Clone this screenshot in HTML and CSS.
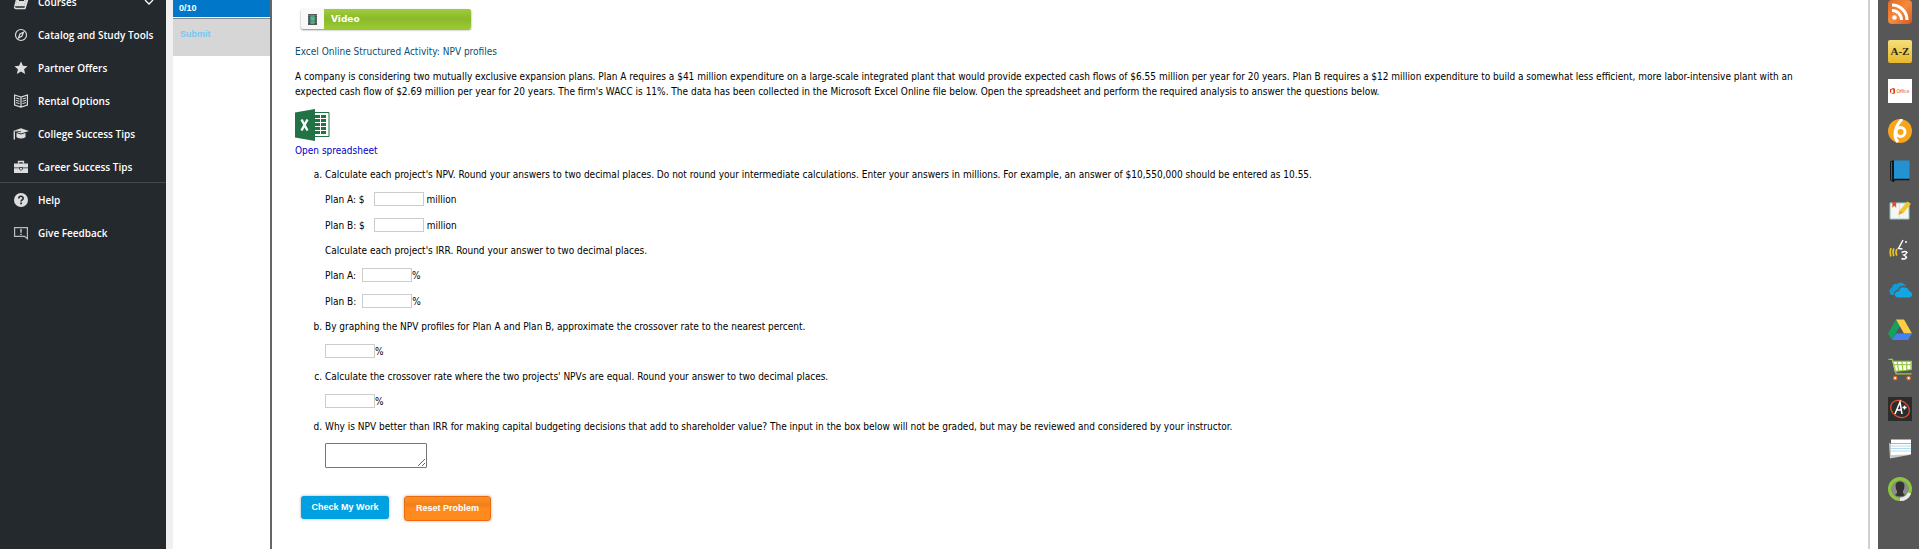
FILE: index.html
```html
<!DOCTYPE html>
<html lang="en">
<head>
<meta charset="utf-8">
<title>NPV profiles</title>
<link rel="stylesheet" href="styles.css">
</head>
<body>
<div class="app">
  <nav class="sidebar" aria-label="Main">
    <ul class="menu">
      <li><a class="menu-link" href="#">
        <svg class="menu-icon" viewBox="0 0 16 16"><path d="M4.500 2h10l-2.500 9.500H2zM1.500 12.500c0 1.500.5 2 1.500 2h9L15 4.500" fill="none" stroke="#ddd" stroke-width="1.400"/><path d="M5 2h9l-2.500 9h-9z" fill="#ddd"/><path d="M6.500 4.500h5M6 6.500h5" stroke="#24292d"/></svg>
        Courses
        <svg class="chevron" viewBox="0 0 10 10"><path d="M1 3l4 4 4-4" fill="none" stroke="#fff" stroke-width="1.300"/></svg></a></li>
      <li><a class="menu-link" href="#">
        <svg class="menu-icon" viewBox="0 0 16 16"><circle cx="8" cy="8" r="5.500" fill="none" stroke="#ddd" stroke-width="1.200"/><path d="M10.500 5.200L9 9l-3.500 2L7 7z" fill="none" stroke="#ddd" stroke-width="1.200"/></svg>
        Catalog and Study Tools</a></li>
      <li><a class="menu-link" href="#">
        <svg class="menu-icon" viewBox="0 0 16 16"><path d="M8 1.500l1.900 4.300 4.700.4-3.500 3.100 1 4.700L8 11.600 3.900 14l1-4.700L1.400 6.200l4.700-.4z" fill="#ddd"/></svg>
        Partner Offers</a></li>
      <li><a class="menu-link" href="#">
        <svg class="menu-icon" viewBox="0 0 16 16"><path d="M8 4L1.600 2v10L8 14l6.400-2V2zM8 4v10" fill="none" stroke="#ddd" stroke-width="1.200"/><path d="M3 5l3.500 1M3 7.300l3.500 1M3 9.600l3.500 1M13 5L9.500 6M13 7.300l-3.500 1M13 9.600l-3.500 1" stroke="#ddd"/></svg>
        Rental Options</a></li>
      <li><a class="menu-link" href="#">
        <svg class="menu-icon" viewBox="0 0 16 16"><path d="M0 5l8-2.800L16 5 8 7.500zM3.500 7L8 8.600 12.500 7v4.200Q8 14 3.500 11.200z" fill="#ddd"/><path d="M1.300 5.500v8" stroke="#ddd" stroke-width="1.400"/><path d="M2 5.200l6 .5" stroke="#24292d" stroke-width=".7"/></svg>
        College Success Tips</a></li>
      <li><a class="menu-link" href="#">
        <svg class="menu-icon" viewBox="0 0 16 16"><path d="M5.500 4.500v-2h5v2" fill="none" stroke="#ddd" stroke-width="1.300"/><path d="M1 4.500h14v4H1zM1 9.300h14V14H1z" fill="#ddd"/><path d="M6.500 8.500h3v1.800L8 11.300l-1.500-1z" fill="#ddd" stroke="#24292d" stroke-width=".8"/></svg>
        Career Success Tips</a></li>
    </ul>
    <ul class="menu menu-help">
      <li><a class="menu-link" href="#">
        <svg class="menu-icon" viewBox="0 0 16 16"><circle cx="8" cy="8" r="7" fill="#ddd"/><path d="M5.800 6.500c0-3 4.400-2.800 4.400-.3 0 1.600-2.100 1.700-2.100 3.300" fill="none" stroke="#24292d" stroke-width="1.600"/><path d="M7.200 10.600h1.800v1.700H7.200z" fill="#24292d"/></svg>
        Help</a></li>
      <li><a class="menu-link" href="#">
        <svg class="menu-icon" viewBox="0 0 16 16"><path d="M1.600 2.600h12.800v11.200l-2.800-2.400h-10z" fill="none" stroke="#bbb" stroke-width="1.200"/><path d="M8 4v3.800M8 8.700V10" stroke="#ddd" stroke-width="1.300"/></svg>
        Give Feedback</a></li>
    </ul>
  </nav>

  <aside class="score-panel">
    <div class="score">0/10</div>
    <button class="submit" type="button" disabled>Submit</button>
  </aside>

  <main class="content">
    <a class="video" href="#">
      <span class="video-thumb"><svg viewBox="0 0 10 12" width="9" height="11"><path d="M0 0h10v12H0z" fill="#444"/><path d="M2.500 1h5v10h-5z" fill="#3f9ea0"/><path d="M2.500 3l3 1 2-1v3l-3 1zM3 9l4-1v2z" fill="#6bbf4b"/><path d="M1 1v10M9 1v10" stroke="#bbb" stroke-dasharray="1 1"/></svg></span>
      <span class="video-label">Video</span>
    </a>
    <h1 class="title">Excel Online Structured Activity: NPV profiles</h1>
    <p class="intro">A company is considering two mutually exclusive expansion plans. Plan A requires a $41 million expenditure on a large-scale integrated plant that would provide expected cash flows of $6.55 million per year for 20 years. Plan B requires a $12 million expenditure to build a somewhat less efficient, more labor-intensive plant with an expected cash flow of $2.69 million per year for 20 years. The firm's WACC is 11%. The data has been collected in the Microsoft Excel Online file below. Open the spreadsheet and perform the required analysis to answer the questions below.</p>
    <a class="sheet" href="#">
      <svg viewBox="0 0 35 32" width="35" height="32"><path d="M19 3.500h15v24H19z" fill="#fff" stroke="#217346"/><path d="M20 6h5v3h-5zM26 6h5v3h-5zM20 10h5v3h-5zM26 10h5v3h-5zM20 14h5v3h-5zM26 14h5v3h-5zM20 18h5v3h-5zM26 18h5v3h-5zM20 22h5v3h-5zM26 22h5v3h-5z" fill="#217346"/><path d="M0 3.500L20 0v32L0 28.500z" fill="#217346"/><path d="M6.500 10.500l6 11M12.500 10.500l-6 11" stroke="#fff" stroke-width="2.400"/></svg>
      <span>Open spreadsheet</span>
    </a>

    <ol class="questions" type="a">
      <li>
        <p class="text">Calculate each project's NPV. Round your answers to two decimal places. Do not round your intermediate calculations. Enter your answers in millions. For example, an answer of $10,550,000 should be entered as 10.55.</p>
        <div class="field money"><label for="npv-a">Plan A: $</label><input id="npv-a" type="text"><span>million</span></div>
        <div class="field money"><label for="npv-b">Plan B: $</label><input id="npv-b" type="text"><span>million</span></div>
        <p class="text">Calculate each project's IRR. Round your answer to two decimal places.</p>
        <div class="field"><label for="irr-a">Plan A:</label><input id="irr-a" type="text"><span>%</span></div>
        <div class="field"><label for="irr-b">Plan B:</label><input id="irr-b" type="text"><span>%</span></div>
      </li>
      <li>
        <p class="text" id="q-b">By graphing the NPV profiles for Plan A and Plan B, approximate the crossover rate to the nearest percent.</p>
        <div class="field"><input type="text" aria-labelledby="q-b"><span>%</span></div>
      </li>
      <li>
        <p class="text" id="q-c">Calculate the crossover rate where the two projects' NPVs are equal. Round your answer to two decimal places.</p>
        <div class="field"><input type="text" aria-labelledby="q-c"><span>%</span></div>
      </li>
      <li>
        <p class="text" id="q-d">Why is NPV better than IRR for making capital budgeting decisions that add to shareholder value? The input in the box below will not be graded, but may be reviewed and considered by your instructor.</p>
        <textarea class="essay" aria-labelledby="q-d"></textarea>
      </li>
    </ol>

    <div class="actions">
      <button class="btn check" type="button">Check My Work</button>
      <button class="btn reset" type="button">Reset Problem</button>
    </div>
  </main>

  <nav class="rail" aria-label="Apps">
    <a href="#" aria-label="RSS"><svg viewBox="0 0 24 24"><defs><linearGradient id="rss" x2="1" y2="1"><stop stop-color="#e06a28"/><stop offset=".5" stop-color="#f58b3c"/><stop offset="1" stop-color="#d9581f"/></linearGradient></defs><rect width="24" height="24" rx="4" fill="url(#rss)"/><circle cx="6.500" cy="17.500" r="2.300" fill="#fff"/><path d="M4 10.500a9.500 9.500 0 0 1 9.500 9.500M4 5a15 15 0 0 1 15 15" fill="none" stroke="#fff" stroke-width="3"/></svg></a>
    <a class="short" href="#" aria-label="Glossary"><span class="glossary">A-Z</span></a>
    <a href="#" aria-label="Office"><span class="office"><svg viewBox="0 0 6 7" width="5" height="6"><path d="M0 1.500L4 0l2 .7v5.600L4 7 0 5.600l4 .3V1.300L1.500 2v3L0 5.600z" fill="#dc3e15"/></svg>Office</span></a>
    <a href="#" aria-label="Bongo"><svg viewBox="0 0 24 24"><circle cx="12" cy="12" r="12" fill="#f8a51b"/><path d="M14 0Q7 8 7 15q0 5 3 8" fill="none" stroke="#fff" stroke-width="3"/><circle cx="12.500" cy="13" r="4.500" fill="none" stroke="#fff" stroke-width="3"/></svg></a>
    <a href="#" aria-label="Book"><svg viewBox="0 0 24 24"><path d="M2 2.500L6 1v20l-1 2-3-2z" fill="#15191c"/><path d="M6 1.500h15.500v19H6z" fill="#2492d1"/><path d="M5 22.500l2-2h14.500" fill="none" stroke="#111" stroke-width="1.300"/><path d="M3.500 3v18" stroke="#777" stroke-width=".7"/></svg></a>
    <a class="short" href="#" aria-label="Notes"><svg viewBox="0 0 24 24"><path d="M1.500 4h20v17h-20z" fill="#f7f5f0" stroke="#67b8bd"/><path d="M4 3h4v6l-2-2-2 2z" fill="#e04e32"/><path d="M11.500 5v16" stroke="#ddd"/><path d="M19.500 2.500l4 2.500-8 9.500-3.500-3z" fill="#f4c52b"/><path d="M12 11.500l3.500 3-5.500 2z" fill="#e1a714"/></svg></a>
    <a href="#" aria-label="Read aloud"><svg viewBox="0 0 24 24"><path d="M15 2l-4.500 8.500 4 .5M13.500 14.500q4-2 5.500 0-1 2-3 2.500 2 1 2.500 2.500-2 2.500-5 1" fill="none" stroke="#fff" stroke-width="1.400"/><circle cx="18" cy="4" r="1" fill="#fff"/><path d="M9 11q-2 3.500 0 6.500M6 10.500q-2 3.500 0 7.500M3 10q-1.500 4.500 0 8.500" fill="none" stroke="#eec321" stroke-width="1.700"/></svg></a>
    <a href="#" aria-label="OneDrive"><svg viewBox="0 0 24 24"><path d="M6 17H4a4 4 0 0 1 0-7.500Q5 5 9 6q5-4 9 2-7-1-8 4-4 0-4 5z" fill="#0f9bd7"/><path d="M10 19.500q-4-.5-3-4 1-2.500 4-2.500 1-5 5.500-3.500Q20 9 21 13q3 1 3 3.500t-3 3z" fill="#12a7e3"/></svg></a>
    <a href="#" aria-label="Google Drive"><svg viewBox="0 0 24 24"><path d="M8 1.500L0 15.500l4 6.500 8-14z" fill="#15a05d"/><path d="M8 1.500h8l8 14h-8z" fill="#fccd45"/><path d="M8 15.500h16L20 22H4z" fill="#4681f2"/></svg></a>
    <a class="short" href="#" aria-label="Store"><svg viewBox="0 0 24 24"><path d="M4 3h20v9L6.500 14z" fill="#fff"/><path d="M0 1.500h4l4 15h16M4 3.500h19.500v8.500L6.500 14M5 7h18.500M9 3.500l1.500 10M14 3.500l1 9.500M19 3.500v9" fill="none" stroke="#9acb45" stroke-width="1.300"/><circle cx="7" cy="21" r="1.700" fill="#fff" stroke="#ed6726" stroke-width="1.300"/><circle cx="21" cy="21" r="1.700" fill="#fff" stroke="#ed6726" stroke-width="1.300"/></svg></a>
    <a href="#" aria-label="Grades"><svg viewBox="0 0 24 24"><path d="M0 0h24v24H0z" fill="#2c2c2c"/><ellipse cx="12" cy="12" rx="10" ry="8" transform="rotate(35 12 12)" fill="none" stroke="#e4502d" stroke-width="1.300"/><path d="M7 17l5-12 2 12M8 13h6M14.500 10.500h4M16.500 8.500v4" fill="none" stroke="#fff" stroke-width="1.500"/></svg></a>
    <a href="#" aria-label="Flashcards"><svg viewBox="0 0 24 24"><path d="M1 6l20 8v4L2 21.500z" fill="#c9c9c9"/><path d="M3 2.500h20v15L3 18z" fill="#fff"/><path d="M3 6.500h20" stroke="#f09b91"/><path d="M3 9h20M3 11.500h20M3 14h20" stroke="#9fd3ea" stroke-width=".8"/></svg></a>
    <a href="#" aria-label="Profile"><svg viewBox="0 0 24 24"><circle cx="12" cy="12" r="8.500" fill="#8c8c8c"/><path d="M7.500 8.500Q8 4.500 12 4.500t4.500 4q0 3.500-1.500 5.500v2l2 2q-5 3-10 0l2-2v-2Q7.500 12 7.500 8.500z" fill="#333"/><circle cx="12" cy="12" r="10.300" fill="none" stroke="#8cc63f" stroke-width="3.400"/><path d="M12 22.300A10.300 10.300 0 0 0 21.500 16" fill="none" stroke="#e9e9ee" stroke-width="3.400"/></svg></a>
  </nav>
</div>
</body>
</html>
```

FILE: styles.css
```css
* { box-sizing: border-box; }
body {
  margin: 0;
  background: #fff;
  color: #000;
  font: 10px/15px "DejaVu Sans Condensed", "DejaVu Sans", Verdana, sans-serif;
}
a { text-decoration: none; }
ul, ol, p, h1 { margin: 0; padding: 0; }

.app {
  display: grid;
  grid-template-columns: 166px 106px minmax(0, 1fr) 41px;
  min-height: 100vh;
}

/* Navigation, scrolled part of the way through its first row */
.sidebar { overflow: hidden; background: #24292d; }
.menu { list-style: none; }
.menu:first-child { margin-top: -15px; }
.menu-help { margin-top: -1px; border-top: 1px solid #45494d; }
.menu-link {
  display: flex;
  align-items: center;
  gap: 9px;
  height: 33px;
  padding: 0 12px 0 13px;
  color: #fff;
  font: 600 10px/16px "Open Sans", sans-serif;
  white-space: nowrap;
}
.menu-icon { width: 16px; height: 16px; flex: none; }
.chevron { width: 10px; height: 10px; margin-left: auto; }

.score-panel {
  padding-left: 7px;
  background: linear-gradient(to right, #f0f0f0 7px, #fff 7px);
  border-right: 2px solid #666;
}
.score {
  height: 17px;
  padding-left: 6px;
  background: #0077c8;
  color: #fff;
  font: bold 9px/17px "Liberation Sans", Arial, sans-serif;
}
.submit {
  display: block;
  width: 100%;
  height: 38px;
  margin-top: 1px;
  padding: 0 0 8px 7px;
  border: 0;
  border-top: 1px solid #888;
  background: #d6d6d6;
  color: #76c8f2;
  font: bold 9px/16px "Liberation Sans", Arial, sans-serif;
  text-align: left;
}

.content {
  margin-right: 8px;
  padding: 9px 60px 28px 23px;
  border-right: 2px solid #d0d0d0;
}
.video {
  display: flex;
  width: 170px;
  height: 20px;
  margin-left: 6px;
  border-radius: 2px;
  background: #f8f8f8;
  box-shadow: 0 1px 2px #888;
}
.video-thumb { display: grid; place-items: center; width: 23px; }
.video-label {
  flex: 1;
  padding-left: 7px;
  border-radius: 0 2px 2px 0;
  background: linear-gradient(#9fcc3c, #8bb92a 50%, #9aca32);
  color: #fff;
  font: bold 9px/20px "DejaVu Sans", Verdana, sans-serif;
}
.title {
  margin-top: 15px;
  color: #0b4f71;
  font-size: 10px;
  font-weight: normal;
}
.intro { margin-top: 10px; }
.sheet { display: grid; justify-items: start; width: max-content; margin-top: 10px; gap: 2px; color: #00c; }

.questions { margin-top: 9px; padding-left: 30px; list-style-type: lower-alpha; }
.questions li + li { margin-top: 10px; }
.text { line-height: 16px; }
.field { display: flex; align-items: center; height: 16px; margin-top: 10px; }
.text + .field { margin-top: 8px; }
.field + .text { margin-top: 10px; }
.field input {
  width: 50px;
  height: 14px;
  padding: 0 2px;
  border: 1px solid #ccc;
  font: inherit;
}
.field label { margin-right: 6px; }
.money label { margin-right: 9px; }
.money input { margin-right: 3px; }
.essay {
  display: block;
  width: 102px;
  height: 25px;
  margin-top: 8px;
  border: 1px solid #767676;
  border-radius: 1px;
}

.actions { display: flex; align-items: flex-start; gap: 15px; margin: 28px 0 0 6px; }
.btn {
  padding: 0;
  border-radius: 3px;
  color: #fff;
  font: bold 9px/23px "Liberation Sans", Arial, sans-serif;
  box-shadow: 0 0 3px #aaa;
}
.check { width: 88px; border: 0; background: #00a0e1; }
.reset { width: 87px; border: 1px solid #ee6c0c; background: linear-gradient(#ff8f25, #f08018 35%, #ff8a1e 50%); }

.rail {
  display: flex;
  flex-direction: column;
  align-items: center;
  gap: 16px;
  padding-left: 3px;
  background: #575757;
}
.rail a { display: block; width: 24px; height: 24px; }
.rail .short { height: 23px; }
.rail svg { display: block; }
.rail a > svg { width: 100%; height: 100%; }
.glossary {
  display: block;
  border-radius: 2px;
  background: linear-gradient(#f6df7b, #e7b92b);
  color: #332b14;
  font: bold 11px/23px "Liberation Serif", serif;
  text-align: center;
}
.office {
  display: flex;
  align-items: center;
  justify-content: center;
  gap: 1px;
  height: 24px;
  background: #fff;
  color: #dc3e15;
  font-size: 5px;
}
```
